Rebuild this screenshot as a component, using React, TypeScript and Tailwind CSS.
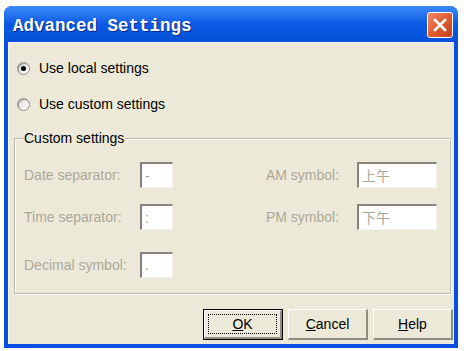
import React from 'react'

function Radio({ checked, label }: { checked?: boolean; label: string }) {
  return (
    <div className="flex items-center h-[18px] pl-[8px]">
      <span className="relative w-[13px] h-[13px] rounded-full border border-[#8e8f8f] bg-gradient-to-br from-[#dcdcd7] to-white shadow-[inset_1px_1px_0_#a0a0a0] flex items-center justify-center">
        {checked && <span className="w-[5px] h-[5px] rounded-full bg-black" />}
      </span>
      <span className="ml-[9px] text-black">{label}</span>
    </div>
  )
}

function Field({ value, wide }: { value: string; wide?: boolean }) {
  return (
    <div
      className={`${wide ? 'w-[80px]' : 'w-[33px]'} h-[26px] bg-white border-t-2 border-l-2 border-t-[#85837a] border-l-[#85837a] border-b border-r border-b-[#f4f3ee] border-r-[#f4f3ee] flex items-center pl-[3px] text-[#aca899] font-['Liberation_Sans','Noto_Sans_CJK_SC',sans-serif]`}
    >
      {value}
    </div>
  )
}

function Btn({ children, def }: { children: React.ReactNode; def?: boolean }) {
  return (
    <div className={`w-[80px] h-[31px] ${def ? 'border border-black' : ''}`}>
      <div className="w-full h-full bg-[#ece9d8] border-t border-l border-t-white border-l-white border-b-2 border-r-2 border-b-[#8f8d80] border-r-[#8f8d80] flex items-center justify-center text-black relative">
        {def && <div className="absolute inset-[3px] border border-dotted border-black" />}
        {children}
      </div>
    </div>
  )
}

export default function App() {
  return (
    <div className="w-[464px] h-[351px] bg-white pl-[4px] pt-[6px] font-['Liberation_Sans',Arial,sans-serif] text-[14px] leading-none">
      <div className="w-[454px] h-[342px] flex flex-col rounded-t-[8px] overflow-hidden bg-[#0a4fe0]">
        {/* Title bar */}
        <div className="h-[36px] flex items-center justify-between pl-[9px] pr-[5px] pt-[2px] bg-gradient-to-b from-[#3d8bf7] via-[#0a5ae6] to-[#0650d8]">
          <span className="mt-[3px] font-['Liberation_Mono',monospace] font-bold text-[17.5px] text-white [text-shadow:1px_1px_0_#0a2a8a]">
            Advanced Settings
          </span>
          <div className="w-[26px] h-[26px] rounded-[3px] border border-white bg-gradient-to-br from-[#f08a6a] via-[#e25a31] to-[#c2401c] flex items-center justify-center">
            <svg width="16" height="16" viewBox="0 0 16 16">
              <path d="M3 3 L13 13 M13 3 L3 13" stroke="white" strokeWidth="2.6" strokeLinecap="square" />
            </svg>
          </div>
        </div>

        {/* Client area */}
        <div className="flex-1 mx-[4px] mb-[4px] bg-[#ece9d8] border-t border-l border-[#f6f5ef] flex flex-col">
          <div className="mt-[16px]">
            <Radio checked label="Use local settings" />
          </div>
          <div className="mt-[18px]">
            <Radio label="Use custom settings" />
          </div>

          {/* Group box */}
          <div className="relative mt-[25px] ml-[5px] w-[437px] h-[156px] border border-[#bdbbac] shadow-[inset_1px_1px_0_white,1px_1px_0_white] pl-[9px] pt-[23px]">
            <span className="absolute left-[9px] top-[-8px] bg-[#ece9d8] pr-[1px] text-black">Custom settings</span>

            <div className="flex items-center h-[26px]">
              <span className="w-[116px] text-[#aca899]">Date separator:</span>
              <Field value="-" />
              <span className="w-[166px] text-right text-[#aca899]">AM symbol:</span>
              <span className="w-[18px]" />
              <Field wide value="上午" />
            </div>
            <div className="flex items-center h-[26px] mt-[16px]">
              <span className="w-[116px] text-[#aca899]">Time separator:</span>
              <Field value=":" />
              <span className="w-[166px] text-right text-[#aca899]">PM symbol:</span>
              <span className="w-[18px]" />
              <Field wide value="下午" />
            </div>
            <div className="flex items-center h-[27px] mt-[21px]">
              <span className="w-[116px] text-[#aca899]">Decimal symbol:</span>
              <Field value="." />
            </div>
          </div>

          {/* Buttons */}
          <div className="flex justify-end gap-[5px] mt-[15px] pr-[1px]">
            <Btn def>
              <span><span className="underline">O</span>K</span>
            </Btn>
            <Btn>
              <span><span className="underline">C</span>ancel</span>
            </Btn>
            <Btn>
              <span><span className="underline">H</span>elp</span>
            </Btn>
          </div>
        </div>
      </div>
    </div>
  )
}
